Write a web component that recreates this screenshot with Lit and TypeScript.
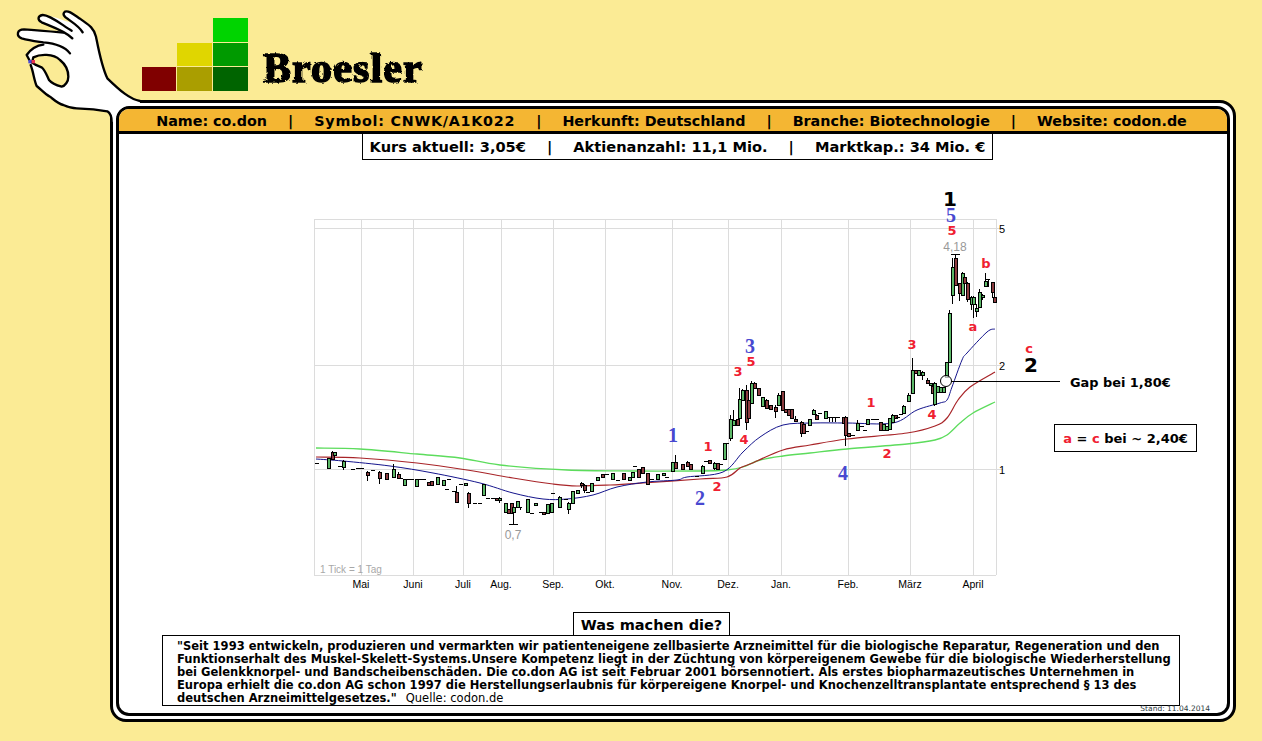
import { LitElement, html, css, svg } from 'lit';
import { customElement } from 'lit/decorators.js';

// [x, body top, body bottom, colour, high, low] in page pixels, d = doji dash
type Candle = [number, number, number, 'g' | 'r' | 'd', number?, number?];

const candles: Candle[] = [
  [317, 463, 463, 'd'], [328, 458, 468, 'g'], [332, 452, 459, 'r', 451], [334, 452, 455, 'g'],
  [340, 466, 466, 'd'], [343, 461, 467, 'g', 460, 470], [353, 469, 469, 'd'], [358, 468, 468, 'd'], [362, 468, 468, 'd'],
  [367, 472, 475, 'r', 471, 481], [373, 470, 470, 'd'], [379, 472, 478, 'r', 471, 484], [386, 473, 479, 'r'],
  [393, 469, 477, 'g', 464], [398, 474, 478, 'r', 472], [401, 478, 478, 'd'], [404, 479, 485, 'g'], [409, 479, 479, 'd'], [412, 479, 479, 'd'],
  [416, 479, 486, 'g'], [420, 479, 479, 'd'], [424, 479, 479, 'd'], [428, 482, 485, 'r'], [431, 481, 485, 'r'],
  [437, 477, 484, 'g'], [443, 480, 485, 'g'], [447, 489, 489, 'd'], [449, 479, 479, 'd'], [454, 491, 491, 'd'],
  [456, 492, 502, 'r', 486], [461, 484, 484, 'd'], [465, 483, 485, 'g'], [468, 493, 503, 'r', 492, 508],
  [475, 503, 503, 'd'], [480, 503, 503, 'd'], [483, 484, 495, 'g'], [488, 498, 498, 'd'], [493, 498, 498, 'd'],
  [496, 498, 500, 'r'], [499, 498, 500, 'g', 497, 503], [505, 503, 512, 'g'], [508, 509, 513, 'r'], [511, 503, 513, 'r'],
  [513, 507, 512, 'g', 506, 524], [517, 501, 507, 'g'], [520, 507, 507, 'd', 505, 510], [527, 499, 512, 'g'], [532, 513, 513, 'd'],
  [535, 503, 505, 'g'], [541, 512, 512, 'd'], [543, 512, 514, 'r'], [547, 504, 513, 'g'], [551, 503, 512, 'g'],
  [553, 493, 493, 'd'], [559, 497, 507, 'g', 496], [566, 499, 499, 'd'], [568, 503, 509, 'g', 502, 514], [572, 491, 503, 'g'],
  [577, 490, 493, 'g'], [581, 483, 485, 'r', 482, 488], [584, 485, 490, 'r', 484, 493], [588, 492, 492, 'd'], [591, 483, 491, 'g'],
  [597, 477, 480, 'g'], [602, 474, 477, 'r'], [607, 474, 474, 'd'], [612, 473, 479, 'g'], [618, 480, 480, 'd'], [623, 473, 479, 'r'],
  [629, 477, 480, 'g'], [632, 472, 477, 'g'], [635, 466, 466, 'd'], [638, 469, 477, 'r'], [642, 467, 473, 'r'], [647, 473, 484, 'r'],
  [652, 479, 479, 'd'], [657, 474, 479, 'g'], [663, 473, 475, 'g'], [667, 477, 477, 'd'], [672, 462, 471, 'g'], [675, 462, 468, 'r', 455],
  [682, 464, 469, 'r'], [687, 462, 466, 'r', 461], [690, 464, 469, 'r'], [697, 476, 476, 'd'], [702, 466, 473, 'g', 465],
  [706, 461, 461, 'd'], [709, 460, 463, 'r'], [714, 463, 468, 'g', 462, 470], [717, 463, 469, 'r'], [721, 464, 464, 'd'],
  [724, 443, 459, 'g'], [727, 443, 443, 'd'], [730, 419, 438, 'g', 415, 441], [733, 420, 425, 'g', 410], [737, 419, 425, 'r'],
  [739, 399, 418, 'g', 388], [742, 390, 400, 'g', 389], [746, 390, 422, 'r', 385, 430], [748, 400, 418, 'r'], [751, 383, 403, 'g', 381],
  [754, 383, 388, 'r', 382], [758, 388, 395, 'r'], [762, 397, 406, 'g'], [766, 400, 408, 'r', 399, 409], [770, 405, 409, 'r'],
  [775, 407, 411, 'r', 405, 418], [778, 395, 405, 'g', 393], [782, 391, 410, 'r'], [785, 409, 412, 'r'], [788, 409, 415, 'r'],
  [791, 409, 418, 'r'], [795, 419, 421, 'r', 416], [801, 422, 433, 'r', 421, 437], [803, 424, 433, 'r'], [807, 431, 431, 'd'],
  [809, 419, 425, 'g'], [813, 410, 414, 'g', 409], [816, 415, 419, 'r', 414], [820, 413, 413, 'd'], [825, 411, 418, 'g'],
  [829, 417, 417, 'd', 417, 422], [832, 417, 417, 'd', 417, 422], [835, 417, 417, 'd', 417, 422], [838, 417, 417, 'd'], [843, 417, 423, 'r'],
  [845, 417, 435, 'r', 416, 446], [848, 433, 436, 'r'], [853, 435, 435, 'd'], [857, 423, 430, 'g', 420], [862, 426, 426, 'd'], [865, 430, 430, 'd'],
  [867, 419, 424, 'g'], [873, 419, 419, 'd'], [877, 419, 419, 'd'], [880, 422, 430, 'r'], [883, 424, 430, 'g'], [886, 426, 430, 'g'],
  [889, 418, 429, 'g'], [892, 415, 422, 'g', 414], [895, 415, 418, 'r'], [898, 417, 417, 'd'], [901, 414, 414, 'd'], [903, 406, 413, 'g', 405],
  [908, 395, 401, 'g', 393], [912, 370, 393, 'g', 358], [915, 370, 373, 'r'], [918, 370, 375, 'g'], [922, 372, 375, 'g', 371, 380],
  [927, 380, 383, 'r', 378], [930, 383, 385, 'g'], [932, 386, 393, 'r'], [934, 383, 404, 'g', 382, 406], [937, 386, 392, 'g'],
  [940, 387, 392, 'g'], [943, 387, 392, 'g'], [946, 362, 377, 'g'], [949, 313, 362, 'g', 310], [952, 267, 295, 'g', 258, 304],
  [955, 258, 285, 'r', 254], [959, 283, 293, 'r', 283, 301], [962, 273, 295, 'g', 272], [964, 277, 283, 'r'], [967, 283, 299, 'r', 282, 302],
  [971, 297, 304, 'g', 296, 310], [973, 297, 304, 'g', 296, 318], [976, 308, 311, 'g', 304, 317], [979, 292, 307, 'g', 289],
  [982, 295, 297, 'g', 294, 300], [985, 281, 286, 'g', 273], [988, 279, 279, 'd', 279, 287], [992, 282, 292, 'r', 282, 298], [994, 297, 302, 'r', 288],
];

const greenAvg = [[316, 448], [360, 449], [417, 454], [460, 458], [500, 465], [567, 470], [633, 471], [700, 471], [727, 470], [743, 467], [760, 460], [783, 456], [810, 453], [847, 449], [907, 444], [935, 440], [947, 435], [960, 423], [973, 413], [995, 402]];
const redAvg = [[316, 457], [360, 458], [417, 463], [467, 470], [513, 478], [553, 484], [577, 486], [610, 485], [643, 483], [700, 479], [727, 477], [740, 468], [750, 464], [783, 450], [810, 445], [847, 439], [907, 433], [935, 426], [947, 418], [958, 400], [970, 387], [995, 372]];
const blueAvg = [[316, 459], [343, 461], [390, 466], [433, 473], [480, 483], [513, 493], [543, 499], [567, 499], [593, 495], [617, 487], [647, 482], [677, 480], [687, 477], [723, 472], [743, 452], [760, 437], [783, 425], [813, 423], [847, 423], [893, 423], [917, 410], [940, 403], [947, 400], [952, 387], [962, 360], [967, 353], [987, 332], [995, 329]];

const months: [string, number][] = [
  ['Mai', 361], ['Juni', 413], ['Juli', 463], ['Aug.', 501], ['Sep.', 553], ['Okt.', 605],
  ['Nov.', 672], ['Dez.', 728], ['Jan.', 781], ['Feb.', 848], ['März', 910], ['April', 973],
];

const blueWaves: [string, number, number][] = [['1', 673, 442], ['2', 700, 505], ['3', 750, 353], ['4', 843, 480], ['5', 951, 222]];
const redWaves: [string, number, number][] = [
  ['1', 708, 451], ['2', 717, 491], ['3', 738, 376], ['4', 744, 444], ['5', 751, 366],
  ['1', 871, 407], ['2', 887, 458], ['3', 912, 349], ['4', 932, 419], ['5', 952, 235],
  ['a', 973, 331], ['b', 986, 268], ['c', 1029, 353],
];

// catmull-rom through the traced points so the averages don't look angular
function smooth(points: number[][]) {
  let d = `M${points[0][0]} ${points[0][1]}`;
  for (let i = 0; i < points.length - 1; i++) {
    const p0 = points[Math.max(i - 1, 0)];
    const p1 = points[i];
    const p2 = points[i + 1];
    const p3 = points[Math.min(i + 2, points.length - 1)];
    const c1x = p1[0] + (p2[0] - p0[0]) / 6;
    const c1y = p1[1] + (p2[1] - p0[1]) / 6;
    const c2x = p2[0] - (p3[0] - p1[0]) / 6;
    const c2y = p2[1] - (p3[1] - p1[1]) / 6;
    d += `C${c1x} ${c1y} ${c2x} ${c2y} ${p2[0]} ${p2[1]}`;
  }
  return d;
}

@customElement('app-root')
export class AppRoot extends LitElement {
  static styles = css`
    :host {
      display: block;
      position: relative;
      width: 1262px;
      height: 741px;
      overflow: hidden;
      background: #fbeb95;
      color: #000;
      font-family: 'DejaVu Sans', Verdana, sans-serif;
    }
    .hand {
      position: absolute;
      left: 0;
      top: 0;
      width: 150px;
      height: 140px;
      z-index: 2;
    }
    .top {
      display: flex;
      align-items: flex-start;
      height: 100px;
      padding: 18px 0 0 142px;
      box-sizing: border-box;
    }
    .blocks {
      display: grid;
      grid-template-columns: 34px 35px 35px;
      grid-template-rows: 24px 23px 24px;
      gap: 1px;
      width: 106px;
    }
    .blocks i:nth-child(1) { grid-area: 1 / 3; background: #00d400; }
    .blocks i:nth-child(2) { grid-area: 2 / 2; background: #e0d600; }
    .blocks i:nth-child(3) { grid-area: 2 / 3; background: #009a00; }
    .blocks i:nth-child(4) { grid-area: 3 / 1; background: #800000; }
    .blocks i:nth-child(5) { grid-area: 3 / 2; background: #aa9e00; }
    .blocks i:nth-child(6) { grid-area: 3 / 3; background: #006400; }
    .wordmark {
      width: 170px;
      height: 50px;
      margin: 28px 0 0 12px;
    }
    .wordmark text {
      font-family: 'Liberation Serif', serif;
      font-weight: 700;
      font-size: 42px;
      letter-spacing: 1.1px;
      stroke: #000;
      stroke-width: 1.5px;
    }
    .frame {
      box-sizing: border-box;
      width: 1126px;
      height: 622px;
      margin-left: 110px;
      padding: 3px;
      background: #fff;
      border: 3px solid #000;
      border-radius: 16px;
    }
    .inner {
      box-sizing: border-box;
      height: 100%;
      border: 3px solid #000;
      border-radius: 13px;
      overflow: hidden;
      display: flex;
      flex-direction: column;
      background: #fff;
    }
    .bar {
      flex: none;
      height: 22px;
      box-sizing: border-box;
      display: flex;
      justify-content: center;
      align-items: center;
      gap: 21px;
      padding: 1px 3px 0 0;
      background: #f4b633;
      font-size: 14.3px;
      font-weight: 700;
      white-space: nowrap;
    }
    .bar .wide { letter-spacing: 0.75px; }
    .rule {
      flex: none;
      height: 3px;
      background: #000;
    }
    .stats {
      flex: none;
      align-self: center;
      display: flex;
      justify-content: center;
      gap: 21px;
      width: 631px;
      height: 26px;
      box-sizing: border-box;
      align-items: center;
      margin-left: 9px;
      border: 1px solid #000;
      border-top: 0;
      font-size: 14.6px;
      font-weight: 700;
      white-space: nowrap;
    }
    .chart {
      flex: none;
      position: relative;
      height: 452px;
    }
    .chart svg {
      display: block;
      width: 1108px;
      height: 452px;
    }
    .chart text { font-family: 'Liberation Sans', Arial, sans-serif; }
    .chart .axis { font-size: 10.5px; fill: #000; text-anchor: middle; }
    .chart .scale { font-size: 11px; fill: #000; }
    .chart .hint { font-size: 10px; fill: #a8a8a8; }
    .chart .extreme { font-size: 12px; fill: #999; text-anchor: middle; }
    .chart .blue { font-family: 'Liberation Serif', serif; font-weight: 700; font-size: 20px; fill: #4848d0; text-anchor: middle; }
    .chart .red { font-family: 'DejaVu Sans', sans-serif; font-weight: 700; font-size: 13px; fill: #f02030; text-anchor: middle; }
    .chart .big { font-family: 'DejaVu Sans', sans-serif; font-weight: 700; font-size: 20px; fill: #000; text-anchor: middle; }
    .chart .gap { font-family: 'DejaVu Sans', sans-serif; font-weight: 700; font-size: 12.9px; fill: #000; }
    .target {
      position: absolute;
      left: 935px;
      top: 264px;
      width: 143px;
      height: 28px;
      box-sizing: border-box;
      display: flex;
      align-items: center;
      justify-content: center;
      border: 1px solid #000;
      background: #fff;
      font-size: 13px;
      font-weight: 700;
      white-space: nowrap;
    }
    .target b { color: #f02030; }
    .title {
      flex: none;
      align-self: flex-start;
      box-sizing: border-box;
      width: 157px;
      height: 23px;
      margin-left: 454px;
      padding-top: 1px;
      display: flex;
      align-items: center;
      justify-content: center;
      border: 1px solid #000;
      border-bottom: 0;
      font-size: 14.5px;
      font-weight: 700;
      white-space: nowrap;
    }
    .about {
      flex: none;
      box-sizing: border-box;
      width: 1018px;
      height: 71px;
      margin-left: 43px;
      padding: 4px 0 0 14px;
      border: 1px solid #000;
      font-size: 11.5px;
      line-height: 13px;
      letter-spacing: 0.014px;
      font-weight: 700;
      white-space: nowrap;
    }
    .about span { font-weight: 400; margin-left: 9px; }
    .stand {
      align-self: flex-end;
      margin: -1px 17px 0 0;
      font-size: 7.5px;
      line-height: 8px;
      color: #2c3a40;
      white-space: nowrap;
    }
  `;

  private renderCandle([x, top, bottom, kind, high, low]: Candle) {
    if (kind === 'd') {
      return svg`
        ${low ? svg`<line x1=${x} x2=${x} y1=${top} y2=${low} stroke="#000" />` : ''}
        <rect x=${x - 2} y=${top} width="4" height="1" fill="#000" />`;
    }
    const fill = kind === 'g' ? '#5cb868' : '#8c3c40';
    return svg`
      <line x1=${x + 0.5} x2=${x + 0.5} y1=${high ?? top} y2=${low ?? bottom} stroke="#000" />
      <rect x=${x - 1} y=${top} width="3" height=${bottom - top} fill=${fill} stroke="#000" stroke-width="1" />`;
  }

  private renderChart() {
    const verticals = [...months.map(m => m[1]), 314, 996];
    return html`
      <svg viewBox="119 160 1108 452">
        <g stroke="#dcdcdc" fill="none" shape-rendering="crispEdges">
          ${verticals.map(x => svg`<line x1=${x} x2=${x} y1="219" y2="575" />`)}
          ${[219, 228, 365, 469, 575].map(y => svg`<line x1="314" x2="996" y1=${y} y2=${y} />`)}
          <line x1="996" x2="1003" y1="228" y2="228" />
          <line x1="996" x2="1003" y1="365" y2="365" />
          <line x1="996" x2="1003" y1="469" y2="469" />
        </g>
        <path d=${smooth(greenAvg)} fill="none" stroke="#5cdc5c" stroke-width="1.3" />
        <path d=${smooth(redAvg)} fill="none" stroke="#a82428" stroke-width="1.2" />
        <path d=${smooth(blueAvg)} fill="none" stroke="#14148c" stroke-width="1" />
        <g shape-rendering="crispEdges">
          ${candles.map(c => this.renderCandle(c))}
          <rect x="509" y="524" width="9" height="1" fill="#000" />
          <rect x="951" y="254" width="9" height="1" fill="#000" />
        </g>
        <text class="hint" x="320" y="573">1 Tick = 1 Tag</text>
        <text class="extreme" x="513" y="539">0,7</text>
        <text class="extreme" x="955" y="251">4,18</text>
        ${months.map(([label, x]) => svg`<text class="axis" x=${x} y="588">${label}</text>`)}
        <text class="scale" x="999" y="233">5</text>
        <text class="scale" x="999" y="370">2</text>
        <text class="scale" x="999" y="474">1</text>
        ${blueWaves.map(([label, x, y]) => svg`<text class="blue" x=${x} y=${y}>${label}</text>`)}
        ${redWaves.map(([label, x, y]) => svg`<text class="red" x=${x} y=${y}>${label}</text>`)}
        <text class="big" x="950" y="206">1</text>
        <text class="big" x="1031" y="372">2</text>
        <circle cx="946" cy="381" r="5.5" fill="#fff" fill-opacity="0.7" stroke="#000" />
        <line x1="951" x2="1060" y1="381.5" y2="381.5" stroke="#000" />
        <text class="gap" x="1070" y="387">Gap bei 1,80€</text>
      </svg>
      <div class="target"><b>a</b>&nbsp;=&nbsp;<b>c</b>&nbsp;bei ~ 2,40€</div>
    `;
  }

  render() {
    return html`
      <svg class="hand" viewBox="0 0 450 420">
        <path
          fill="#fff"
          d="M420 303C390 298 360 272 322 235C305 200 296 150 288 110C282 82 262 72 240 56C222 44 205 30 195 35C186 42 192 50 205 58L215 68C190 62 150 44 128 45C112 48 112 60 125 67C150 78 175 85 190 92C160 95 110 90 72 88C50 88 48 108 65 115C90 122 110 124 130 127C110 135 90 150 80 165C80 175 85 182 92 195C100 215 102 240 110 258C125 270 135 282 150 290C165 302 175 312 190 315C205 322 215 325 230 325L280 328L322 334C332 340 335 350 335 366L345 366C345 340 365 316 393 315L420 312Z"
        />
        <g fill="none" stroke="#000" stroke-width="7" stroke-linejoin="round" stroke-linecap="round">
          <path
            d="M420 303C390 298 360 272 322 235C305 200 296 150 288 110C282 82 262 72 240 56C222 44 205 30 195 35C186 42 192 50 205 58C222 70 240 82 248 97"
          />
          <path d="M215 92C190 78 150 44 128 45C112 48 112 60 125 67C150 78 195 92 217 115" />
          <path d="M190 98C160 95 110 90 72 88C50 88 48 108 65 115C90 122 110 124 130 127C165 130 195 140 210 160" />
          <path d="M130 134C110 135 90 150 80 165L88 180" />
          <path
            d="M92 195C100 215 102 240 110 258C125 270 135 282 150 290C165 302 175 312 190 315C205 322 215 325 230 325L280 328L322 334C332 340 335 350 335 366"
          />
          <path
            fill="#fbeb95"
            d="M100 172C120 162 160 160 180 180C195 192 205 205 205 230C205 245 195 258 185 260C170 256 155 250 147 240C140 225 135 210 125 202C115 198 105 195 96 188Z"
          />
        </g>
        <rect x="85" y="180" width="10" height="10" fill="#4848d0" />
        <rect x="95" y="180" width="10" height="10" fill="#e83050" />
      </svg>

      <div class="top">
        <div class="blocks"><i></i><i></i><i></i><i></i><i></i><i></i></div>
        <svg class="wordmark" viewBox="0 0 170 50">
          <defs>
            <filter id="rough" x="-5%" y="-5%" width="110%" height="110%">
              <feTurbulence type="fractalNoise" baseFrequency="0.3" numOctaves="2" seed="4" />
              <feDisplacementMap in="SourceGraphic" scale="3" />
            </filter>
          </defs>
          <text x="3" y="36" filter="url(#rough)">Broesler</text>
        </svg>
      </div>

      <div class="frame">
        <div class="inner">
          <div class="bar">
            <span>Name: co.don</span><span>|</span>
            <span class="wide">Symbol: CNWK/A1K022</span><span>|</span>
            <span>Herkunft: Deutschland</span><span>|</span>
            <span>Branche: Biotechnologie</span><span>|</span>
            <span>Website: codon.de</span>
          </div>
          <div class="rule"></div>
          <div class="stats">
            <span>Kurs aktuell: 3,05€</span><span>|</span>
            <span>Aktienanzahl: 11,1 Mio.</span><span>|</span>
            <span>Marktkap.: 34 Mio. €</span>
          </div>
          <div class="chart">${this.renderChart()}</div>
          <div class="title">Was machen die?</div>
          <div class="about">
            "Seit 1993 entwickeln, produzieren und vermarkten wir patienteneigene zellbasierte Arzneimittel für die biologische Reparatur, Regeneration und den<br />
            Funktionserhalt des Muskel-Skelett-Systems.Unsere Kompetenz liegt in der Züchtung von körpereigenem Gewebe für die biologische Wiederherstellung<br />
            bei Gelenkknorpel- und Bandscheibenschäden. Die co.don AG ist seit Februar 2001 börsennotiert. Als erstes biopharmazeutisches Unternehmen in<br />
            Europa erhielt die co.don AG schon 1997 die Herstellungserlaubnis für körpereigene Knorpel- und Knochenzelltransplantate entsprechend § 13 des<br />
            deutschen Arzneimittelgesetzes."<span>Quelle: codon.de</span>
          </div>
          <div class="stand">Stand: 11.04.2014</div>
        </div>
      </div>
    `;
  }
}
